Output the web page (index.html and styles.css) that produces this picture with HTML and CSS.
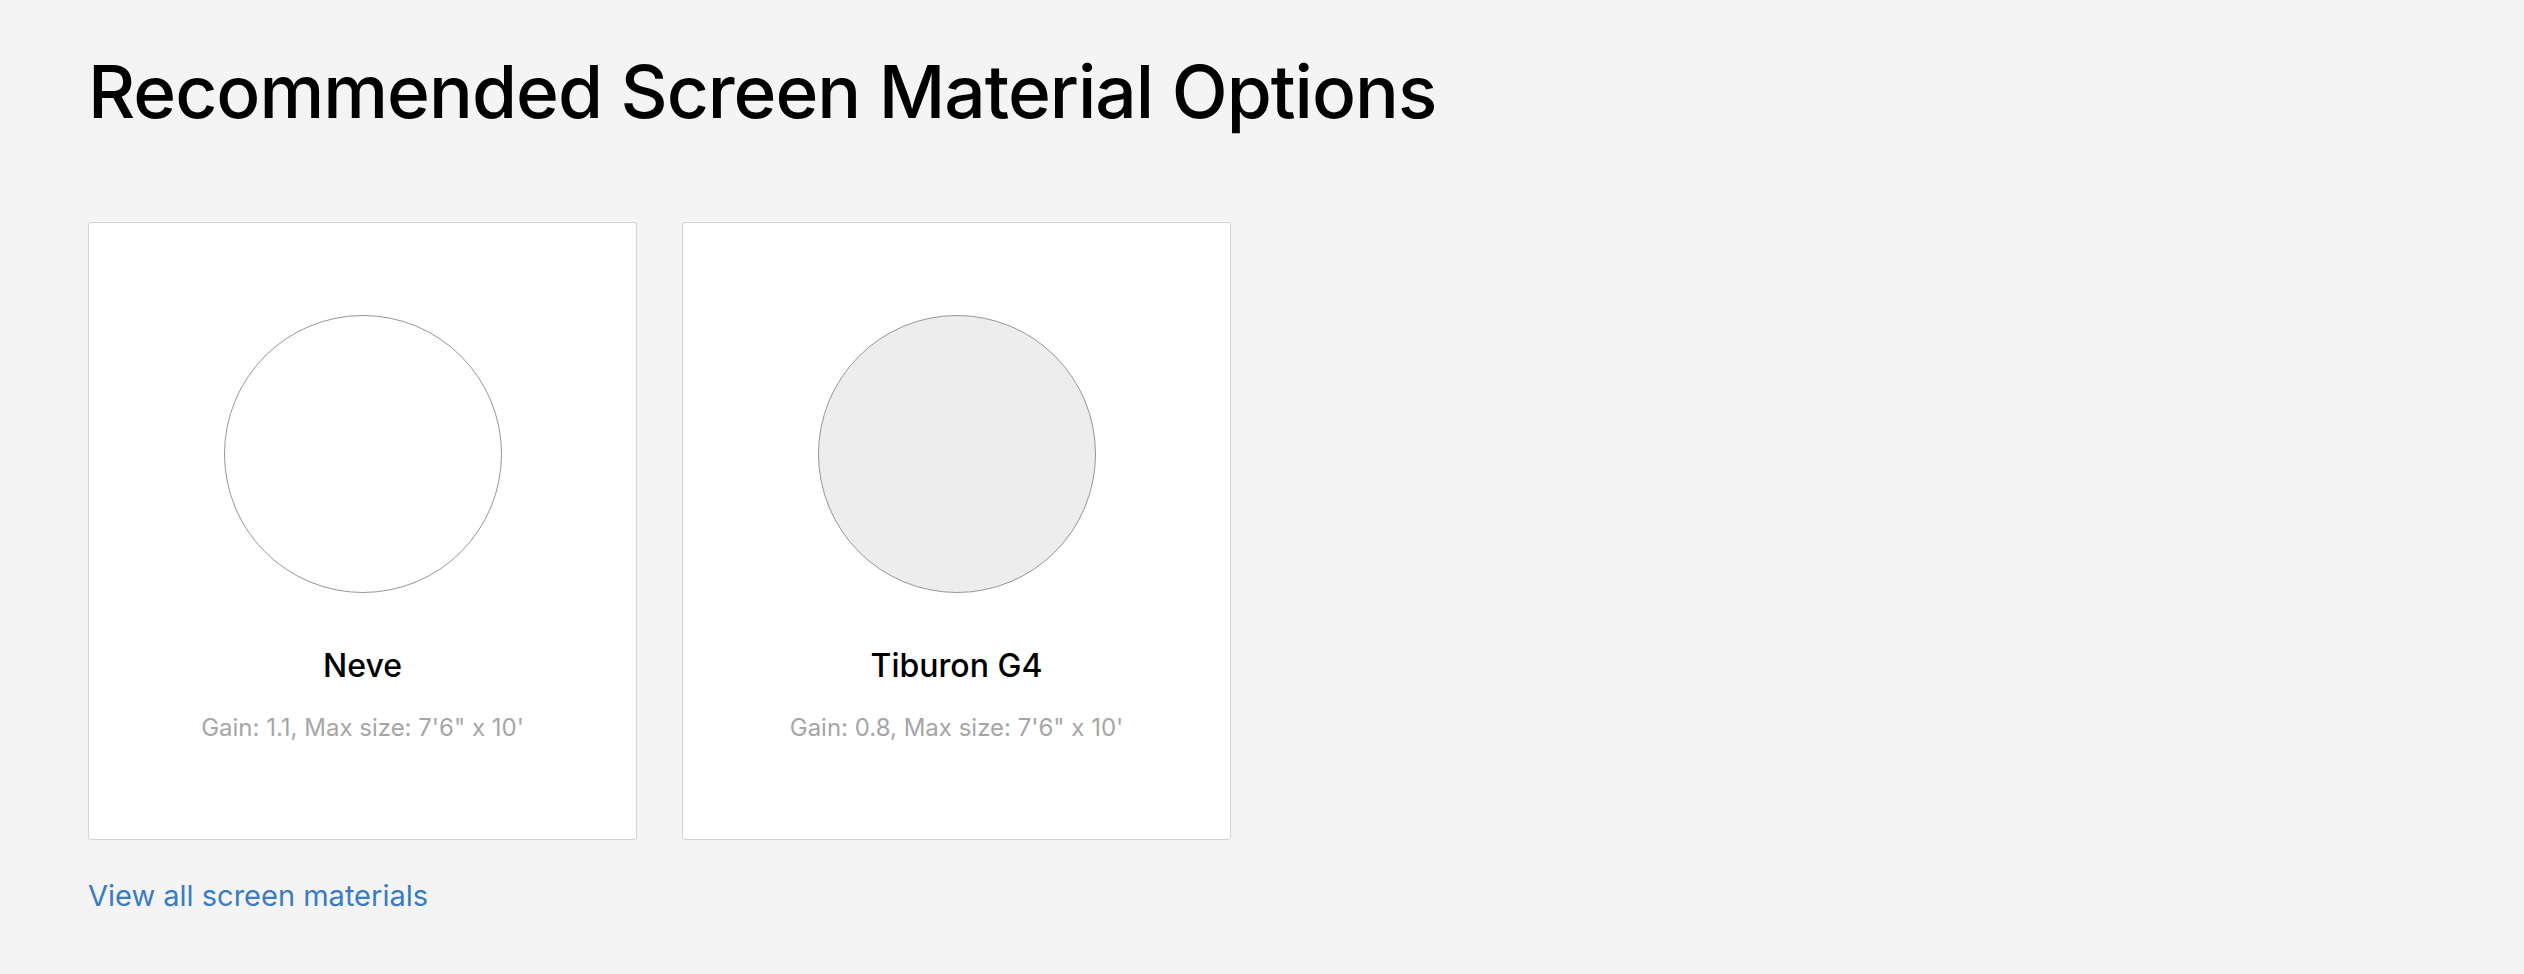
FILE: index.html
```html
<!DOCTYPE html>
<html lang="en">
<head>
    <meta charset="UTF-8">
    <meta name="viewport" content="width=device-width, initial-scale=1.0">
    <title>Recommended Screen Material Options</title>
    <link rel="stylesheet" href="styles.css">
</head>
<body>
    <div id="materials-section">
        <h1 class="section-title">Recommended Screen Material Options</h1>
        <div class="material-list">
            <div class="material-card">
                <div class="swatch swatch-white"></div>
                <h3 class="material-name">Neve</h3>
                <p class="material-specs">Gain: 1.1, Max size: 7'6" x 10'</p>
            </div>
            <div class="material-card">
                <div class="swatch swatch-grey"></div>
                <h3 class="material-name">Tiburon G4</h3>
                <p class="material-specs">Gain: 0.8, Max size: 7'6" x 10'</p>
            </div>
        </div>
        <a class="view-all" href="#">View all screen materials</a>
    </div>
</body>
</html>
```

FILE: styles.css
```css
body {
    font-family: Inter, Lato, sans-serif;
    background-color: #f4f4f4;
    margin: 0;
    padding: 0;
    color: #000000;
}
#materials-section {
    padding: 55px 88px 0 88px;
}
.section-title {
    font-size: 73px;
    line-height: 73px;
    font-weight: 500;
    letter-spacing: -1px;
    margin: 0 0 94px 0;
}
.material-list {
    display: flex;
    gap: 45px;
}
.material-card {
    box-sizing: border-box;
    width: 549px;
    height: 618px;
    background-color: #ffffff;
    border: 1px solid #d2d2d2;
    border-radius: 3px;
    padding-top: 92px;
    display: flex;
    flex-direction: column;
    align-items: center;
}
.swatch {
    width: 278px;
    height: 278px;
    box-sizing: border-box;
    border-radius: 50%;
    border: 1px solid #969696;
}
.swatch-white {
    background-color: #ffffff;
}
.swatch-grey {
    background-color: #ededed;
}
.material-name {
    font-size: 32px;
    line-height: 40px;
    font-weight: 500;
    margin: 53px 0 0 0;
}
.material-specs {
    font-size: 24px;
    line-height: 32px;
    color: #a6a6a6;
    margin: 26px 0 0 0;
}
.view-all {
    display: inline-block;
    margin-top: 38px;
    font-size: 29px;
    line-height: 36px;
    color: #3a7cc2;
    text-decoration: none;
}
```
